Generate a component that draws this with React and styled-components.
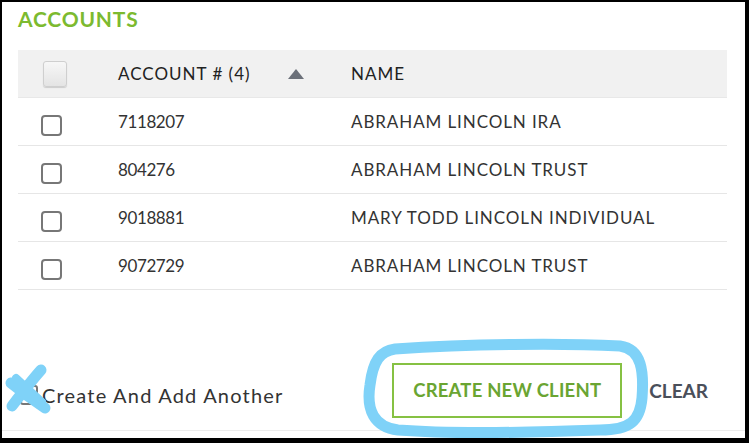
import React from "react";
import styled, { createGlobalStyle } from "styled-components";

const GlobalStyle = createGlobalStyle`
    html, body {
        margin: 0;
        padding: 0;
        background: #ffffff;
    }
    body {
        font-family: Lato, "Open Sans", sans-serif;
        color: #333;
    }
`;

const Frame = styled.div`
    position: relative;
    box-sizing: border-box;
    width: 749px;
    height: 443px;
    border-style: solid;
    border-color: #000;
    border-width: 2px 4px 5px 2px;
    background: #fff;
    display: flex;
    flex-direction: column;
`;

const Panel = styled.div`
    flex: 1;
    display: flex;
    flex-direction: column;
    padding: 0 18px 0 16px;
`;

const Title = styled.h2`
    margin: 5px 0 0;
    font-size: 21px;
    line-height: 24px;
    font-weight: 700;
    color: #7cba2f;
    letter-spacing: 0.8px;
`;

const Table = styled.div`
    margin-top: 19px;
    display: flex;
    flex-direction: column;
`;

const Row = styled.div`
    display: grid;
    grid-template-columns: 100px 233px 1fr;
    align-items: center;
    height: 47px;
    background: ${p => (p.$head ? "#f1f1f1" : "transparent")};
    border-bottom: 1px solid ${p => (p.$head ? "#e8e8e8" : "#e6e6e6")};
`;

const BoxCell = styled.div`
    display: flex;
    padding-left: ${p => (p.$head ? "25px" : "23px")};
    padding-top: ${p => (p.$head ? "0" : "8px")};
`;

const HeadBox = styled.span`
    box-sizing: border-box;
    width: 24px;
    height: 26px;
    border: 1px solid #cfcfcf;
    border-radius: 3px;
    background: linear-gradient(#f7f7f7, #e4e4e4);
    box-shadow: 0 1px 1px rgba(0, 0, 0, 0.15);
`;

const Box = styled.span`
    box-sizing: border-box;
    width: 21px;
    height: 21px;
    border: 2px solid #777;
    border-radius: 4px;
    background: #fff;
`;

const HeadCell = styled.div`
    display: flex;
    align-items: center;
    font-size: 17px;
    color: #222;
    letter-spacing: 1px;
`;

const SortArrow = styled.span`
    margin-left: 37px;
    width: 0;
    height: 0;
    border-left: 8px solid transparent;
    border-right: 8px solid transparent;
    border-bottom: 10px solid #6b7079;
`;

const Cell = styled.div`
    font-size: 17px;
    color: #333;
    letter-spacing: ${p => (p.$num ? "-0.4px" : "0.9px")};
`;

const Footer = styled.div`
    height: 80px;
    margin-bottom: 7px;
    display: flex;
    align-items: center;
    border-bottom: 1px solid #ececec;
    padding-left: 18px;
`;

const CheckLabel = styled.label`
    display: flex;
    align-items: center;
    gap: 4px;
    font-size: 20px;
    color: #333;
    letter-spacing: 1.2px;
    margin-top: 9px;
`;

const FooterBox = styled.span`
    box-sizing: border-box;
    width: 18px;
    height: 20px;
    border: 2px solid #777;
    border-radius: 3px;
`;

const Actions = styled.div`
    margin-left: auto;
    display: flex;
    align-items: center;
    gap: 27px;
    padding-right: 37px;
`;

const PrimaryButton = styled.button`
    box-sizing: border-box;
    width: 230px;
    height: 55px;
    border: 2px solid #86c143;
    background: #fff;
    color: #6aa532;
    font-family: Lato, "Open Sans", sans-serif;
    font-size: 18.5px;
    font-weight: 700;
    letter-spacing: 0.2px;
    cursor: pointer;
`;

const TextButton = styled.button`
    border: none;
    background: none;
    padding: 0;
    color: #4a4f5a;
    font-family: Lato, "Open Sans", sans-serif;
    font-size: 19px;
    font-weight: 700;
    cursor: pointer;
`;

const Marks = styled.svg`
    position: absolute;
    left: -2px;
    top: -2px;
    width: 749px;
    height: 443px;
    pointer-events: none;
`;

const accounts = [
    { id: "7118207", name: "ABRAHAM LINCOLN IRA" },
    { id: "804276", name: "ABRAHAM LINCOLN TRUST" },
    { id: "9018881", name: "MARY TODD LINCOLN INDIVIDUAL" },
    { id: "9072729", name: "ABRAHAM LINCOLN TRUST" },
];

export default function App() {
    return (
        <>
            <GlobalStyle />
            <Frame>
                <Panel>
                    <Title>ACCOUNTS</Title>
                    <Table>
                        <Row $head>
                            <BoxCell $head><HeadBox /></BoxCell>
                            <HeadCell>ACCOUNT # (4)<SortArrow /></HeadCell>
                            <HeadCell>NAME</HeadCell>
                        </Row>
                        {accounts.map((a) => (
                            <Row key={a.id + a.name}>
                                <BoxCell><Box /></BoxCell>
                                <Cell $num>{a.id}</Cell>
                                <Cell>{a.name}</Cell>
                            </Row>
                        ))}
                    </Table>
                </Panel>
                <Footer>
                    <CheckLabel><FooterBox />Create And Add Another</CheckLabel>
                    <Actions>
                        <PrimaryButton>CREATE NEW CLIENT</PrimaryButton>
                        <TextButton>CLEAR</TextButton>
                    </Actions>
                </Footer>
                <Marks viewBox="0 0 749 443">
                    <g fill="none" stroke="#7fd2f8" strokeWidth="10" strokeLinecap="round" strokeLinejoin="round">
                        <path d="M41 370 C32 380 22 393 12 406" strokeWidth="11" />
                        <path d="M11 383 C22 392 33 400 45 408" strokeWidth="11" />
                        <path d="M16 378 L42 402" strokeWidth="8" />
                        <path d="M395 349 C470 344 560 343 620 346 C642 349 644 372 642 398 C640 421 630 430 600 430 C520 433 450 434 398 430 C374 427 366 410 370 385 C373 361 380 351 395 349 Z" strokeWidth="11" />
                    </g>
                </Marks>
            </Frame>
        </>
    );
}
